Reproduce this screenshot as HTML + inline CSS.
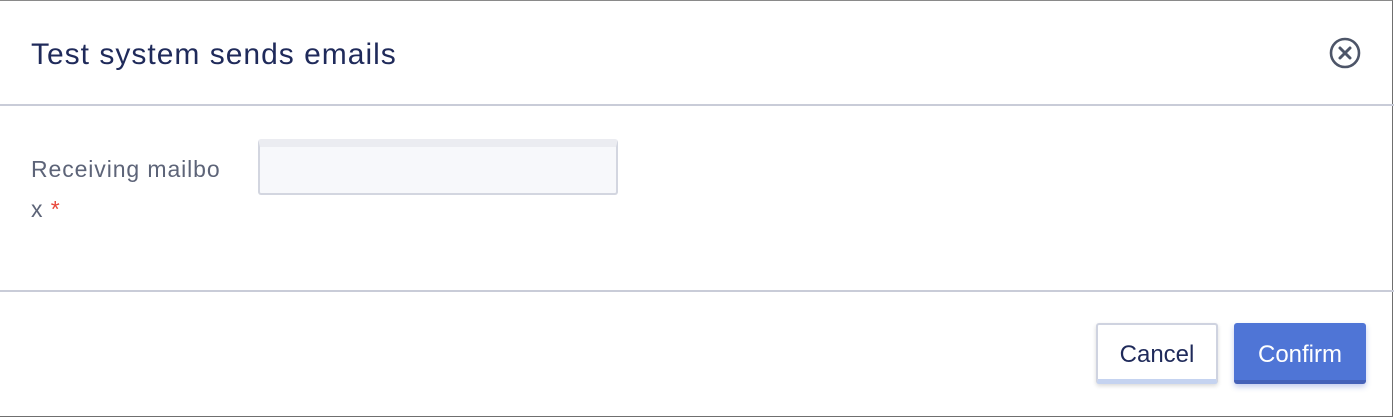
<!DOCTYPE html>
<html><head><style>
body{margin:0;width:1394px;height:418px;background:#fff;font-family:"Liberation Sans",sans-serif;position:relative;overflow:hidden}
.frame{position:absolute;left:0;top:0;width:1393px;height:417px;border-top:1px solid #8a8a8a;border-right:1px solid #6f6f6f;border-bottom:1px solid #6f6f6f;box-sizing:border-box}
.title{position:absolute;left:31px;top:38px;font-size:30px;letter-spacing:1px;color:#1f2a5a}
.hl{position:absolute;left:0;width:1394px;height:2px;background:#c9ccd8}
.lab{position:absolute;left:31px;font-size:23px;letter-spacing:0.9px;color:#5d6478}
.inp{position:absolute;left:258px;top:139px;width:360px;height:56px;border:2px solid #d3d6e0;border-radius:3px;background:#f7f8fb;box-sizing:border-box;border-top:8px solid #ebecf1}
.btn{position:absolute;top:323px;height:61px;border-radius:3px;font-size:24px;display:flex;align-items:center;justify-content:center;box-sizing:border-box;padding-top:6px}
.cancel{left:1096px;width:122px;background:#fff;border:2px solid #cfd3e0;border-bottom:5px solid #c5d3f0;color:#1f2a5a;box-shadow:0 2px 4px rgba(0,0,0,.15)}
.ok{left:1234px;width:132px;background:#4f75d6;border-bottom:4px solid #4561b8;color:#fff;box-shadow:0 3px 6px rgba(60,90,200,.3)}
</style></head><body>
<div class="frame"></div>
<div class="title">Test system sends emails</div>
<svg style="position:absolute;left:1329px;top:37px" width="32" height="32" viewBox="0 0 32 32"><circle cx="16" cy="16" r="14" fill="none" stroke="#4d5568" stroke-width="2.6"/><path d="M11 11L21 21M21 11L11 21" stroke="#4d5568" stroke-width="3" stroke-linecap="round"/></svg>
<div class="hl" style="top:104px"></div>
<div class="lab" style="top:156px">Receiving mailbo</div>
<div class="lab" style="top:196px">x <span style="color:#e8473a">*</span></div>
<div class="inp"></div>
<div class="hl" style="top:290px"></div>
<div class="btn cancel">Cancel</div>
<div class="btn ok">Confirm</div>
</body></html>
